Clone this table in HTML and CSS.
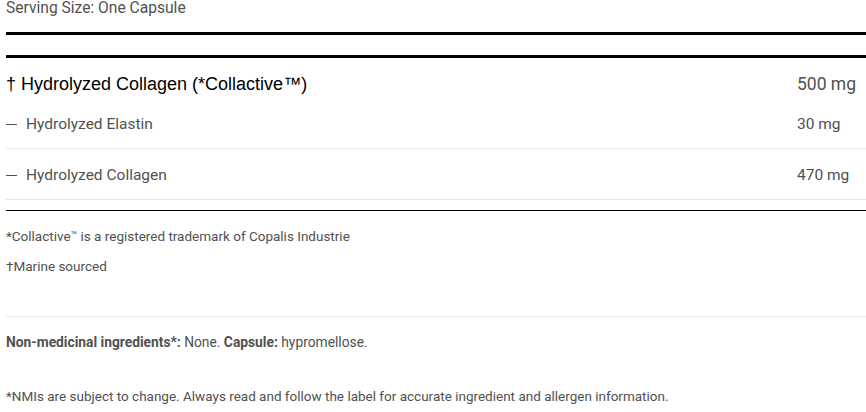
FILE: index.html
```html
<!DOCTYPE html>
<html lang="en">
<head>
<meta charset="utf-8">
<title>Supplement Facts</title>
<link rel="stylesheet" href="styles.css">
</head>
<body>
<div class="page">
  <div class="serving">Serving Size: One Capsule</div>
  <div class="rule-thick first"></div>
  <div class="rule-thick second"></div>
  <div class="row main">
    <div class="name heading">† Hydrolyzed Collagen (*Collactive™)</div>
    <div class="amount big">500 mg</div>
  </div>
  <div class="row sub first-sub">
    <div class="name"><span class="dash"></span>Hydrolyzed Elastin</div>
    <div class="amount">30 mg</div>
  </div>
  <div class="row sub second-sub">
    <div class="name"><span class="dash"></span>Hydrolyzed Collagen</div>
    <div class="amount">470 mg</div>
  </div>
  <div class="rule-thin"></div>
  <p class="note note-one">*Collactive<span class="tm">™</span> is a registered trademark of Copalis Industrie</p>
  <p class="note note-two">†Marine sourced</p>
  <div class="rule-light"></div>
  <p class="note nmi"><b>Non-medicinal ingredients*:</b> None. <b>Capsule:</b> hypromellose.</p>
  <p class="note final">*NMIs are subject to change. Always read and follow the label for accurate ingredient and allergen information.</p>
</div>
</body>
</html>
```

FILE: styles.css
```css
html, body {
  margin: 0;
  padding: 0;
  background: #fff;
}

.page {
  padding-left: 6px;
  font-family: Roboto, "Liberation Sans", sans-serif;
  color: #515151;
}

.serving {
  font-size: 15.6px;
  line-height: 16px;
}

.rule-thick {
  border-top: 3px solid #000;
}

.rule-thick.first {
  margin-top: 16px;
}

.rule-thick.second {
  margin-top: 20px;
}

.row {
  display: flex;
  align-items: center;
}

.name {
  flex: 1;
  display: flex;
  align-items: center;
}

.amount {
  width: 69px;
  font-size: 15.5px;
  line-height: 20px;
}

.amount.big {
  font-size: 17.5px;
  line-height: 24px;
}

.row.main {
  padding-top: 14px;
}

.heading {
  font-family: "Liberation Sans", Arial, sans-serif;
  font-size: 18px;
  line-height: 24px;
  color: #000;
}

.row.sub {
  font-size: 15.5px;
  line-height: 20px;
  border-bottom: 1px solid #e5e5e5;
  padding-bottom: 14px;
}

.row.first-sub {
  padding-top: 18px;
}

.row.second-sub {
  padding-top: 16px;
}

.dash {
  display: inline-block;
  width: 11px;
  border-top: 1.5px solid #515151;
  margin-right: 9px;
}

.rule-thin {
  border-top: 1px solid #000;
  margin-top: 10px;
}

.note {
  margin: 0;
  font-size: 13.5px;
  line-height: 20px;
}

.tm {
  font-size: 10.5px;
  vertical-align: 2px;
}

.note-one {
  margin-top: 15px;
}

.note-two {
  margin-top: 10px;
}

.rule-light {
  border-top: 1px solid #e5e5e5;
  margin-top: 40px;
}

.nmi {
  margin-top: 15px;
  font-size: 13.8px;
}

.nmi b {
  font-weight: 700;
}

.final {
  margin-top: 34px;
}
```
